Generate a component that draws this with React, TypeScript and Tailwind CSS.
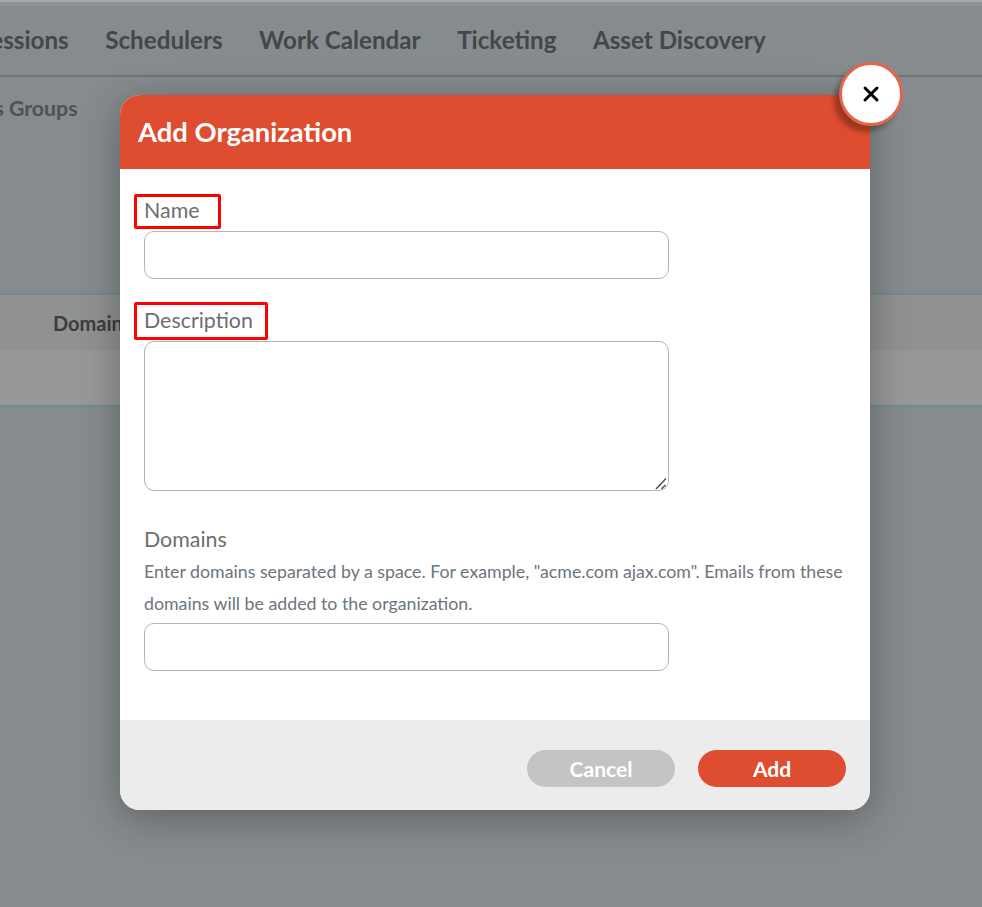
import { X } from 'lucide-react';

const navItems = ['Sessions', 'Schedulers', 'Work Calendar', 'Ticketing', 'Asset Discovery'];

function Label({ children }: { children: string }) {
  return <label className="block text-[21.4px] leading-[30px] text-[#6e6e6e]">{children}</label>;
}

function Background() {
  return (
    <div className="absolute inset-0 overflow-hidden bg-[#868b8d]">
      <div className="h-[2px] bg-[#a8a8a8]" />
      <div className="h-[4px] bg-[#8f9395]" />
      <nav className="h-[71px] border-b-2 border-[#6f7476] flex items-center gap-[36.5px] pb-[1px] -ml-[23px] w-[1010px] text-[24.2px] font-bold text-[#43474a] whitespace-nowrap">
        {navItems.map((n) => (
          <span key={n}>{n}</span>
        ))}
      </nav>
      <div className="-ml-[77px] mt-[16px] h-[200px] text-[21.3px] leading-[30px] font-bold text-[#4e5255]">Sessions Groups</div>
      <div className="border-y-2 border-[#6f8a94]">
        <div className="h-[55px] bg-[#909191] flex items-center pl-[53px] text-[20px] font-bold text-[#3c3c3c]">Domains</div>
        <div className="h-[55px] bg-[#979897]" />
      </div>
    </div>
  );
}

export default function App() {
  return (
    <div className="relative w-[982px] h-[907px] overflow-hidden font-['Lato','Liberation_Sans',sans-serif]">
      <Background />

      <div className="absolute left-[120px] top-[95px] w-[750px] h-[715px] flex flex-col rounded-[20px] bg-white shadow-[0_8px_40px_rgba(0,0,0,0.3)]">
        <div className="h-[74px] shrink-0 bg-[#de4d30] rounded-t-[20px] flex items-center px-[18px] text-[27.4px] font-bold text-white">
          Add Organization
        </div>

        <div className="flex-1 pt-[26px] px-[24px]">
          <Label>Name</Label>
          <input className="block mt-[6px] w-[525px] h-[48px] rounded-[10px] border border-[#b5b5b5] bg-white" />
          <div className="mt-[26px]">
            <Label>Description</Label>
          </div>
          <div className="relative mt-[6px] w-[525px] h-[150px]">
            <textarea className="block w-full h-full resize-none rounded-[10px] border border-[#b5b5b5] bg-white" />
            {/* resize grip */}
            <svg className="absolute right-[1px] bottom-[1px]" width="13" height="13" viewBox="0 0 13 13" fill="none" stroke="#555" strokeWidth="1.6">
              <path d="M1 12 L11 1.5" />
              <path d="M6.5 12 L10.5 8" />
            </svg>
          </div>
          <div className="mt-[33px]">
            <Label>Domains</Label>
          </div>
          <p className="mt-[1px] w-[710px] text-[17.75px] leading-[32px] text-[#6c757d]">
            Enter domains separated by a space. For example, "acme.com ajax.com". Emails from these domains will be added to the organization.
          </p>
          <input className="block mt-[4px] w-[525px] h-[48px] rounded-[10px] border border-[#b5b5b5] bg-white" />
        </div>

        <div className="h-[90px] shrink-0 bg-[#ececec] rounded-b-[20px] flex items-start justify-end gap-[23px] pt-[30px] pr-[24px]">
          <button className="w-[148px] h-[37px] rounded-full bg-[#c4c4c4] text-[21px] font-bold text-white">Cancel</button>
          <button className="w-[148px] h-[37px] rounded-full bg-[#de4d30] text-[21px] font-bold text-white">Add</button>
        </div>
      </div>

      {/* close button sits over the modal corner */}
      <button className="absolute left-[839px] top-[62px] w-[64px] h-[64px] rounded-full bg-white border-[3px] border-[#e5644a] flex items-center justify-center shadow-[-5px_6px_5px_rgba(0,0,0,0.3)]">
        <X size={24} strokeWidth={3} color="#000" />
      </button>

      {/* red annotation boxes */}
      <div className="absolute left-[134px] top-[194px] w-[87px] h-[35px] border-[3px] border-[#ff0000] rounded-[2px]" />
      <div className="absolute left-[134px] top-[302px] w-[134px] h-[38px] border-[3px] border-[#ff0000] rounded-[2px]" />
    </div>
  );
}
